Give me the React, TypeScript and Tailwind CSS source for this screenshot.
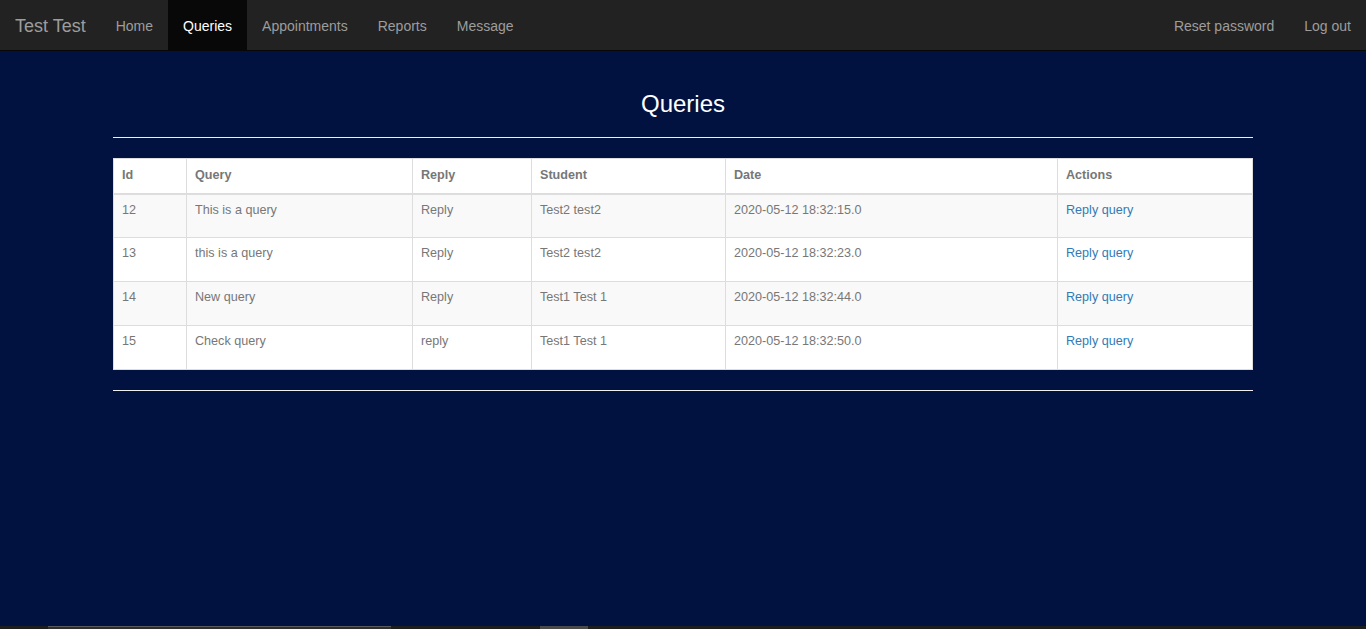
import React from 'react';

const rows = [
  { id: 12, query: 'This is a query', reply: 'Reply', student: 'Test2 test2', date: '2020-05-12 18:32:15.0' },
  { id: 13, query: 'this is a query', reply: 'Reply', student: 'Test2 test2', date: '2020-05-12 18:32:23.0' },
  { id: 14, query: 'New query', reply: 'Reply', student: 'Test1 Test 1', date: '2020-05-12 18:32:44.0' },
  { id: 15, query: 'Check query', reply: 'reply', student: 'Test1 Test 1', date: '2020-05-12 18:32:50.0' },
];

const navLinks = ['Home', 'Queries', 'Appointments', 'Reports', 'Message'];

function Navbar() {
  return (
    <nav className="flex h-[51px] shrink-0 items-stretch justify-between border-b border-[#080808] bg-[#222222] text-[14px]">
      <div className="flex items-stretch">
        <a className="flex items-center px-[15px] pt-[2px] text-[18px] text-[#9d9d9d]">Test Test</a>
        {navLinks.map((l) => (
          <a
            key={l}
            className={
              l === 'Queries'
                ? 'flex items-center bg-[#080808] px-[15px] pt-[2px] text-white'
                : 'flex items-center px-[15px] pt-[2px] text-[#9d9d9d]'
            }
          >
            {l}
          </a>
        ))}
      </div>
      <div className="flex items-stretch">
        <a className="flex items-center px-[15px] pt-[2px] text-[#9d9d9d]">Reset password</a>
        <a className="flex items-center px-[15px] pt-[2px] text-[#9d9d9d]">Log out</a>
      </div>
    </nav>
  );
}

export default function App() {
  return (
    <div className="flex h-screen flex-col overflow-hidden bg-[#021240] font-['Liberation_Sans',Arial,sans-serif]">
      <Navbar />

      <main className="flex-1">
        <div className="mx-auto w-[1140px] pt-[40px]">
          <h3 className="text-center text-[24px] leading-[26px] text-white">Queries</h3>
          <hr className="mt-[20px] border-t border-[#eeeeee]" />

          <table className="mt-[20px] w-full border-collapse bg-white text-left text-[12.6px] leading-[20px] text-[#777777]">
            <colgroup>
              <col className="w-[73px]" />
              <col className="w-[226px]" />
              <col className="w-[119px]" />
              <col className="w-[194px]" />
              <col className="w-[332px]" />
              <col />
            </colgroup>
            <thead>
              <tr className="h-[35px] border-b-2 border-[#dddddd]">
                {['Id', 'Query', 'Reply', 'Student', 'Date', 'Actions'].map((h) => (
                  <th key={h} className="border border-b-2 border-[#dddddd] px-[8px] pb-[2px] align-middle font-bold">
                    {h}
                  </th>
                ))}
              </tr>
            </thead>
            <tbody>
              {rows.map((r, i) => (
                <tr key={r.id} className={i % 2 === 0 ? 'h-[44px] bg-[#f9f9f9]' : 'h-[44px] bg-white'}>
                  <td className="border border-[#dddddd] px-[8px] pt-[5px] align-top">{r.id}</td>
                  <td className="border border-[#dddddd] px-[8px] pt-[5px] align-top">{r.query}</td>
                  <td className="border border-[#dddddd] px-[8px] pt-[5px] align-top">{r.reply}</td>
                  <td className="border border-[#dddddd] px-[8px] pt-[5px] align-top">{r.student}</td>
                  <td className="border border-[#dddddd] px-[8px] pt-[5px] align-top">{r.date}</td>
                  <td className="border border-[#dddddd] px-[8px] pt-[5px] align-top">
                    <a className="text-[#337ab7]">Reply query</a>
                  </td>
                </tr>
              ))}
            </tbody>
          </table>

          <hr className="mt-[20px] border-t border-[#eeeeee]" />
        </div>
      </main>

      {/* scrollbar strip at the bottom edge */}
      <div className="flex h-[3px] shrink-0 bg-[#1e1e1e]">
        <div className="ml-[48px] w-[343px] border-t border-[#5a5a5a] bg-[#2f2f2f]" />
        <div className="ml-[149px] w-[48px] bg-[#4a4a4a]" />
      </div>
    </div>
  );
}
